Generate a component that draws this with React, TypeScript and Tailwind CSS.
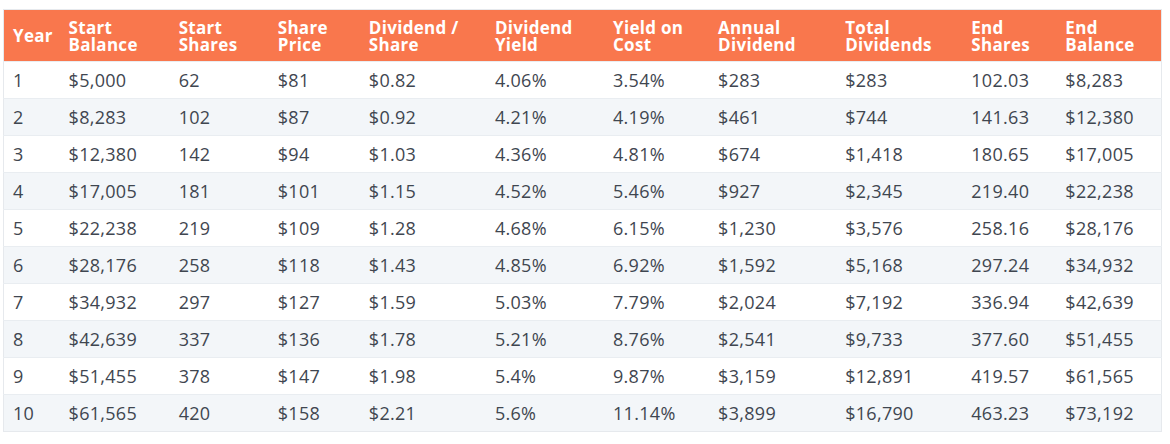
const headers = [
  ['Year'],
  ['Start', 'Balance'],
  ['Start', 'Shares'],
  ['Share', 'Price'],
  ['Dividend /', 'Share'],
  ['Dividend', 'Yield'],
  ['Yield on', 'Cost'],
  ['Annual', 'Dividend'],
  ['Total', 'Dividends'],
  ['End', 'Shares'],
  ['End', 'Balance'],
];

const widths = ['w-[56px]', 'w-[110px]', 'w-[99px]', 'w-[91px]', 'w-[126px]', 'w-[118px]', 'w-[105px]', 'w-[127px]', 'w-[126px]', 'w-[94px]', 'w-[105px]'];

const rows = [
  ['1', '$5,000', '62', '$81', '$0.82', '4.06%', '3.54%', '$283', '$283', '102.03', '$8,283'],
  ['2', '$8,283', '102', '$87', '$0.92', '4.21%', '4.19%', '$461', '$744', '141.63', '$12,380'],
  ['3', '$12,380', '142', '$94', '$1.03', '4.36%', '4.81%', '$674', '$1,418', '180.65', '$17,005'],
  ['4', '$17,005', '181', '$101', '$1.15', '4.52%', '5.46%', '$927', '$2,345', '219.40', '$22,238'],
  ['5', '$22,238', '219', '$109', '$1.28', '4.68%', '6.15%', '$1,230', '$3,576', '258.16', '$28,176'],
  ['6', '$28,176', '258', '$118', '$1.43', '4.85%', '6.92%', '$1,592', '$5,168', '297.24', '$34,932'],
  ['7', '$34,932', '297', '$127', '$1.59', '5.03%', '7.79%', '$2,024', '$7,192', '336.94', '$42,639'],
  ['8', '$42,639', '337', '$136', '$1.78', '5.21%', '8.76%', '$2,541', '$9,733', '377.60', '$51,455'],
  ['9', '$51,455', '378', '$147', '$1.98', '5.4%', '9.87%', '$3,159', '$12,891', '419.57', '$61,565'],
  ['10', '$61,565', '420', '$158', '$2.21', '5.6%', '11.14%', '$3,899', '$16,790', '463.23', '$73,192'],
];

export default function App() {
  return (
    <div className="bg-white w-[1170px] h-[444px] pt-[9px] pl-[3px] font-['Open_Sans',sans-serif]">
      <table className="table-fixed border-collapse border border-[#e6e9ed] w-[1159px]">
        <colgroup>
          {widths.map((w, i) => (
            <col key={i} className={w} />
          ))}
        </colgroup>
        <thead>
          <tr className="bg-[#f9774d] h-[52px]">
            {headers.map((h, i) => (
              <th key={i} className="text-left align-middle pl-[9px] text-white font-bold text-[17px] leading-[17px] tracking-[0.3px] whitespace-nowrap">
                {h.map((line, j) => (
                  <div key={j}>{line}</div>
                ))}
              </th>
            ))}
          </tr>
        </thead>
        <tbody>
          {rows.map((r, i) => (
            <tr key={i} className={`h-[37px] border-t border-[#e9edf1] ${i % 2 === 1 ? 'bg-[#f3f6f9]' : 'bg-white'}`}>
              {r.map((c, j) => (
                <td key={j} className="pl-[9px] align-middle text-[18px] leading-[24px] tracking-[0.3px] text-[#3f4650]">
                  {c}
                </td>
              ))}
            </tr>
          ))}
        </tbody>
      </table>
    </div>
  );
}
